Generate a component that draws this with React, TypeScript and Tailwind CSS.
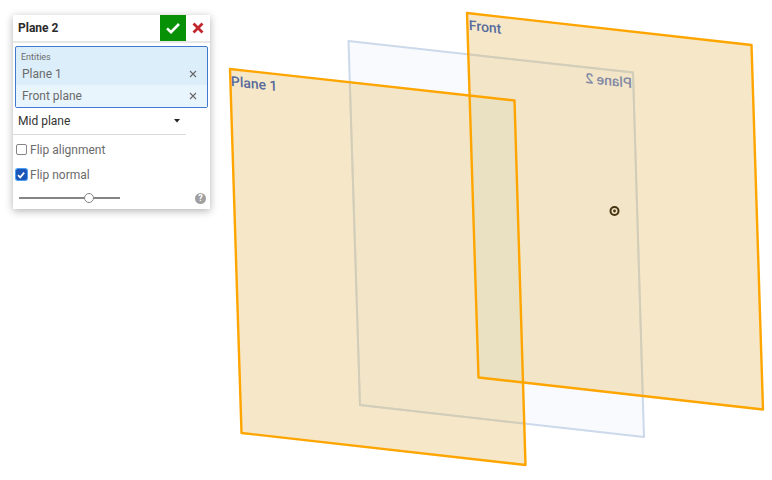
import { useState } from 'react'

type Point = [number, number]

const PLANE_1: Point[] = [[19, 69], [303.5, 100.5], [314.5, 465], [30.5, 433]]
const PLANE_2: Point[] = [[137.5, 41], [422, 72.5], [433, 437], [149, 405]]
const FRONT: Point[] = [[256, 13], [540.5, 45], [552, 409.5], [267.5, 377.5]]
const OVERLAP: Point[] = [[258.5, 95.5], [303.5, 100.5], [312, 382.5], [267.5, 377.5]]

const toPath = (points: Point[]) => `M${points.map((p) => p.join(' ')).join('L')}Z`

function Scene() {
  return (
    <svg
      viewBox="0 0 561 480"
      className="min-w-0 flex-1 self-start font-['Roboto',sans-serif]"
      role="img"
      aria-label="Planes"
    >
      <path d={toPath(PLANE_2)} fill="#f8fafd" stroke="#cbd9eb" strokeWidth="2" strokeLinejoin="round" />
      <path d={toPath(PLANE_1) + toPath(FRONT)} fill="#f0d7a5" fillOpacity="0.6" />
      <clipPath id="covered">
        <path d={toPath(PLANE_1) + toPath(FRONT)} />
      </clipPath>
      <path d={toPath(PLANE_2)} clipPath="url(#covered)" fill="none" stroke="#d2cdb9" strokeWidth="2" />
      <path d={toPath(OVERLAP)} fill="#eae0c2" />
      <g fill="none" stroke="#ffa500" strokeWidth="2.4" strokeLinejoin="round">
        <path d={toPath(PLANE_1)} />
        <path d={toPath(FRONT)} />
      </g>
      <g fill="#566b9c" fontSize="14" fontWeight="500">
        <text transform="matrix(0.994 0.112 0.03 1 20 86)">Plane 1</text>
        <text transform="matrix(0.994 0.112 0.03 1 258 30)">Front</text>
        <text transform="matrix(-0.994 -0.112 0.03 1 421 88)" fill="#8289a5">
          Plane 2
        </text>
      </g>
      <circle cx="403.5" cy="211" r="4" fill="none" stroke="#46330f" strokeWidth="2" />
      <circle cx="403.5" cy="211" r="1.4" fill="#46330f" />
    </svg>
  )
}

type CheckProps = {
  id: string
  label: string
  checked: boolean
  onChange: (checked: boolean) => void
}

function Check({ id, label, checked, onChange }: CheckProps) {
  return (
    <div className="flex h-[25px] items-center gap-[3px] pl-[2px]">
      <span className="grid size-3 place-items-center">
        <input
          id={id}
          type="checkbox"
          checked={checked}
          onChange={(e) => onChange(e.target.checked)}
          className="col-start-1 row-start-1 size-[11px] appearance-none rounded-[2px] border border-[#858585] bg-white checked:border-[#1a55b8] checked:bg-[#1a55b8] checked:ring-1 checked:ring-[#4a9cf5]"
        />
        {checked && (
          <svg viewBox="0 0 10 10" className="pointer-events-none col-start-1 row-start-1 size-[10px]">
            <path d="M2 5.2 4.2 7.4 8.2 2.6" fill="none" stroke="white" strokeWidth="1.7" />
          </svg>
        )}
      </span>
      <label htmlFor={id}>{label}</label>
    </div>
  )
}

export default function App() {
  const [title, setTitle] = useState('Plane 2')
  const [entities, setEntities] = useState(['Plane 1', 'Front plane'])
  const [flipAlignment, setFlipAlignment] = useState(false)
  const [flipNormal, setFlipNormal] = useState(true)
  const [opacity, setOpacity] = useState(71)

  return (
    <main className="flex min-h-screen bg-white pl-[13px] font-['Roboto',sans-serif] text-[12px] text-[#6b6b6b]">
      <form
        className="mt-[15px] mr-px w-[197px] shrink-0 self-start bg-white shadow-[0_2px_8px_rgba(0,0,0,0.3)]"
        onSubmit={(e) => e.preventDefault()}
      >
        <div className="flex h-7 border-b-2 border-[#e8e8e8]">
          <input
            aria-label="Plane name"
            value={title}
            onChange={(e) => setTitle(e.target.value)}
            className="min-w-0 flex-1 pl-[5px] font-bold text-[#2b2b2b] outline-none"
          />
          <button type="submit" aria-label="Accept" className="grid w-[26px] place-items-center bg-[#079107]">
            <svg viewBox="0 0 16 16" className="size-4">
              <path d="M2 8.4 6 12.2 14 4" fill="none" stroke="white" strokeWidth="2.6" />
            </svg>
          </button>
          <button type="button" aria-label="Cancel" className="grid w-6 place-items-center">
            <svg viewBox="0 0 12 12" className="size-3">
              <path d="M1.5 1.5 10.5 10.5M10.5 1.5 1.5 10.5" stroke="#c1272d" strokeWidth="2.8" />
            </svg>
          </button>
        </div>

        <div className="mx-[2px] mt-[3px] rounded-[2px] border border-[#4079cf] bg-[#dceefa]">
          <h2 className="pt-1 pl-[5px] text-[9px] leading-3">Entities</h2>
          <ul>
            {entities.map((name) => (
              <li key={name} className="flex h-[22px] items-center justify-between pr-2 pl-[6px] last:bg-[#e9f5fd]">
                {name}
                <button
                  type="button"
                  aria-label={`Remove ${name}`}
                  onClick={() => setEntities(entities.filter((n) => n !== name))}
                  className="grid size-3 place-items-center"
                >
                  <svg viewBox="0 0 8 8" className="size-2">
                    <path d="M1 1 7 7M7 1 1 7" stroke="#666" strokeWidth="1.1" />
                  </svg>
                </button>
              </li>
            ))}
          </ul>
        </div>

        <div className="mr-6 grid h-[27px] items-center border-b border-[#dadada]">
          <select
            aria-label="Plane type"
            className="col-start-1 row-start-1 w-full appearance-none bg-transparent pr-5 pl-[5px] text-[#333] outline-none"
          >
            <option>Mid plane</option>
            <option>Offset</option>
          </select>
          <svg
            viewBox="0 0 6 4"
            className="pointer-events-none col-start-1 row-start-1 mr-[6px] h-1 w-[6px] justify-self-end"
          >
            <path d="M0 0H6L3 3.6Z" fill="#222" />
          </svg>
        </div>

        <div className="flex flex-col pt-[2px]">
          <Check id="flip-alignment" label="Flip alignment" checked={flipAlignment} onChange={setFlipAlignment} />
          <Check id="flip-normal" label="Flip normal" checked={flipNormal} onChange={setFlipNormal} />
        </div>

        <div className="flex h-[22px] items-center justify-between pr-1 pl-[6px]">
          <input
            type="range"
            aria-label="Opacity"
            min={0}
            max={100}
            value={opacity}
            onChange={(e) => setOpacity(Number(e.target.value))}
            className="h-3 w-[101px] appearance-none bg-transparent [&::-webkit-slider-runnable-track]:h-[2px] [&::-webkit-slider-runnable-track]:bg-[#858585] [&::-webkit-slider-thumb]:mt-[-4px] [&::-webkit-slider-thumb]:size-[10px] [&::-webkit-slider-thumb]:appearance-none [&::-webkit-slider-thumb]:rounded-full [&::-webkit-slider-thumb]:border [&::-webkit-slider-thumb]:border-[#858585] [&::-webkit-slider-thumb]:bg-white"
          />
          <button
            type="button"
            aria-label="Help"
            className="grid size-[11px] place-items-center rounded-full bg-[#a0a0a0] text-[9px] leading-none font-bold text-white"
          >
            ?
          </button>
        </div>
      </form>

      <Scene />
    </main>
  )
}
